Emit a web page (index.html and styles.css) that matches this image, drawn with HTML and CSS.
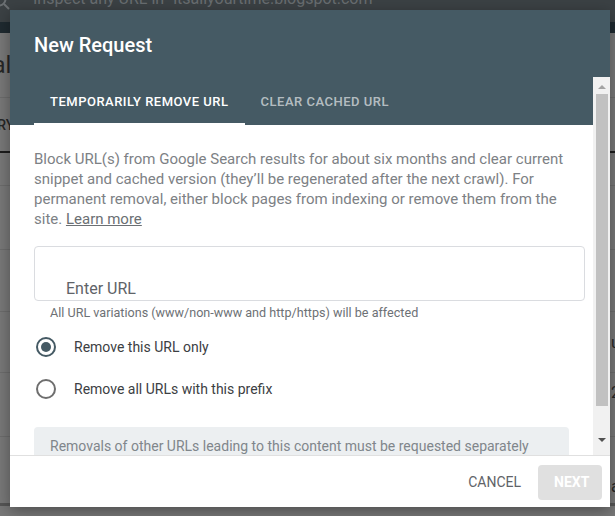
FILE: index.html
```html
<!DOCTYPE html>
<html lang="en">
<head>
    <meta charset="UTF-8">
    <meta name="viewport" content="width=device-width, initial-scale=1.0">
    <title>Removals - New Request</title>
    <link rel="stylesheet" href="styles.css">
</head>
<body>

<!-- page behind the modal, dimmed -->
<div class="page">
    <div class="topbar">
        <svg class="search-icon" width="24" height="24" viewBox="0 0 24 24">
            <circle cx="9" cy="9" r="6.5" fill="none" stroke="#6b7073" stroke-width="2"/>
            <path d="M14 14 L19 19" stroke="#6b7073" stroke-width="2"/>
        </svg>
        <span class="topbar-text">Inspect any URL in "itsallyourtime.blogspot.com"</span>
    </div>
    <div class="topbar-strip"></div>
    <div class="page-title"><span>Removals</span></div>
    <div class="page-tabs"><span>TEMPORARY REMOVALS</span></div>
    <div class="page-row r1"></div>
    <div class="page-row r2"></div>
    <div class="page-row r3"></div>
    <div class="page-row r4"><span class="cell">u</span></div>
    <div class="page-row r5"><span class="cell">2</span></div>
    <div class="page-row r6"><span class="cell">a</span></div>
</div>

<div class="dialog">
    <div class="dialog-header">
        <h2>New Request</h2>
        <div class="tabs">
            <div class="tab active">TEMPORARILY REMOVE URL</div>
            <div class="tab">CLEAR CACHED URL</div>
        </div>
    </div>

    <div class="dialog-body">
        <p class="intro">Block URL(s) from Google Search results for about six months and clear current snippet and cached version (they’ll be regenerated after the next crawl). For permanent removal, either block pages from indexing or remove them from the site. <a href="#">Learn more</a></p>

        <div class="url-field"><span>Enter URL</span></div>
        <div class="hint">All URL variations (www/non-www and http/https) will be affected</div>

        <label class="radio-row">
            <span class="radio checked"></span>
            <span>Remove this URL only</span>
        </label>
        <label class="radio-row">
            <span class="radio"></span>
            <span>Remove all URLs with this prefix</span>
        </label>

        <div class="notice">Removals of other URLs leading to this content must be requested separately</div>
    </div>

    <div class="dialog-footer">
        <button class="btn-text">CANCEL</button>
        <button class="btn-next" disabled>NEXT</button>
    </div>

    <div class="scrollbar">
        <span class="arrow up"></span>
        <span class="thumb"></span>
        <span class="arrow down"></span>
    </div>
</div>

</body>
</html>
```

FILE: styles.css
```css
body {
    margin: 0;
    background: #787878;
    font-family: Roboto, "Noto Sans", sans-serif;
    overflow: hidden;
}

/* dimmed page */
.page {
    height: 516px;
    color: #262626;
}
.topbar {
    height: 22px;
    background: #3b4144;
    display: flex;
    align-items: flex-start;
    overflow: hidden;
}
.search-icon {
    margin-left: -10px;
    margin-top: -10px;
    flex-shrink: 0;
}
.topbar-text {
    margin-left: 19px;
    margin-top: -11px;
    font-size: 16px;
    color: #686d70;
    white-space: nowrap;
}
.topbar-strip {
    height: 11px;
    background: #1f2a30;
}
.page-title {
    height: 64px;
    border-bottom: 1px solid #6c6c6c;
    display: flex;
    align-items: center;
    overflow: hidden;
}
.page-title span {
    font-size: 24px;
    margin-left: -81px;
    white-space: nowrap;
}
.page-tabs {
    height: 53px;
    border-bottom: 2px solid #1c1c1c;
    display: flex;
    align-items: center;
    overflow: hidden;
}
.page-tabs span {
    font-size: 14px;
    font-weight: 500;
    margin-left: -68px;
    white-space: nowrap;
}
.page-row {
    border-bottom: 1px solid #6c6c6c;
    display: flex;
    padding-left: 611px;
    font-size: 16px;
}
.r1 { height: 32px; }
.r2 { height: 63px; }
.r3 { height: 61px; }
.r4 { height: 60px; align-items: center; }
.r5 { height: 63px; }
.r5 .cell { margin-top: 10px; }
.r6 { height: 66px; border-bottom: 3px solid #555; }
.r6 .cell { margin-top: 40px; }

/* modal */
.dialog {
    position: absolute;
    top: 10px;
    left: 10px;
    width: 600px;
    height: 497px;
    background: #fff;
    box-shadow: 0 4px 14px rgba(0, 0, 0, 0.35);
    display: flex;
    flex-direction: column;
    overflow: hidden;
}
.dialog-header {
    background: #455a64;
    height: 115px;
    padding: 23px 24px 0;
    box-sizing: border-box;
    display: flex;
    flex-direction: column;
}
.dialog-header h2 {
    margin: 0;
    font-size: 20px;
    line-height: 24px;
    font-weight: 500;
    color: #fff;
}
.tabs {
    display: flex;
    margin-top: 20px;
    height: 48px;
}
.tab {
    padding: 0 16px;
    font-size: 13px;
    font-weight: 500;
    letter-spacing: 0.5px;
    color: rgba(255, 255, 255, 0.62);
    display: flex;
    align-items: center;
    border-bottom: 2px solid transparent;
    padding-top: 2px;
}
.tab.active {
    color: #fff;
    border-bottom-color: #fff;
}

.dialog-body {
    flex: 1;
    overflow: hidden;
    padding: 24px 25px 0 24px;
}
.intro {
    margin: 0;
    font-size: 15px;
    line-height: 20px;
    color: #7d8185;
}
.intro a {
    color: #6b6f73;
}
.url-field {
    margin-top: 17px;
    height: 55px;
    border: 1px solid #dadce0;
    border-radius: 4px;
    display: flex;
    align-items: flex-end;
    padding: 0 0 1px 31px;
    box-sizing: border-box;
    font-size: 16px;
    color: #5f6368;
}
.url-field span {
    line-height: 20px;
}
.hint {
    padding-left: 16px;
    font-size: 12.6px;
    line-height: 16px;
    margin-top: 4px;
    color: #6d7175;
}
.radio-row {
    display: flex;
    align-items: center;
    gap: 18px;
    height: 42px;
    padding-left: 2px;
    font-size: 14px;
    color: #3c4043;
}
.radio-row:first-of-type {
    margin-top: 5px;
}
.radio {
    width: 16px;
    height: 16px;
    border: 2px solid #6e6e6e;
    border-radius: 50%;
    display: flex;
    align-items: center;
    justify-content: center;
}
.radio.checked {
    border-color: #455a64;
}
.radio.checked::after {
    content: "";
    width: 10px;
    height: 10px;
    border-radius: 50%;
    background: #455a64;
}
.notice {
    margin-top: 17px;
    margin-right: 16px;
    background: #eceff1;
    border-radius: 4px 4px 0 0;
    padding: 9px 16px 12px;
    font-size: 14px;
    line-height: 20px;
    color: #80868b;
}

.dialog-footer {
    height: 52px;
    border-top: 1px solid #e0e0e0;
    box-sizing: border-box;
    display: flex;
    justify-content: flex-end;
    align-items: center;
    padding-right: 8px;
    gap: 1px;
}
.dialog-footer button {
    font-family: Roboto, sans-serif;
    font-size: 14px;
    border: none;
    height: 35px;
    border-radius: 4px;
    padding: 0 16px;
}
.btn-text {
    background: none;
    color: #5f6368;
}
.btn-next {
    background: #e0e0e0;
    color: #fff;
    font-weight: 700;
    width: 64px;
    margin-top: 1px;
}

/* native-style scrollbar over the body */
.scrollbar {
    position: absolute;
    top: 67px;
    right: 0;
    width: 17px;
    height: 378px;
    background: #f1f1f1;
    display: flex;
    flex-direction: column;
    align-items: center;
}
.thumb {
    width: 12px;
    height: 312px;
    background: #c1c1c1;
    margin-top: 5px;
}
.arrow {
    width: 0;
    height: 0;
    border-left: 4px solid transparent;
    border-right: 4px solid transparent;
}
.arrow.up {
    border-bottom: 4px solid #a3a3a3;
    margin-top: 8px;
}
.arrow.down {
    border-top: 4px solid #505050;
    margin-top: 32px;
}
```
